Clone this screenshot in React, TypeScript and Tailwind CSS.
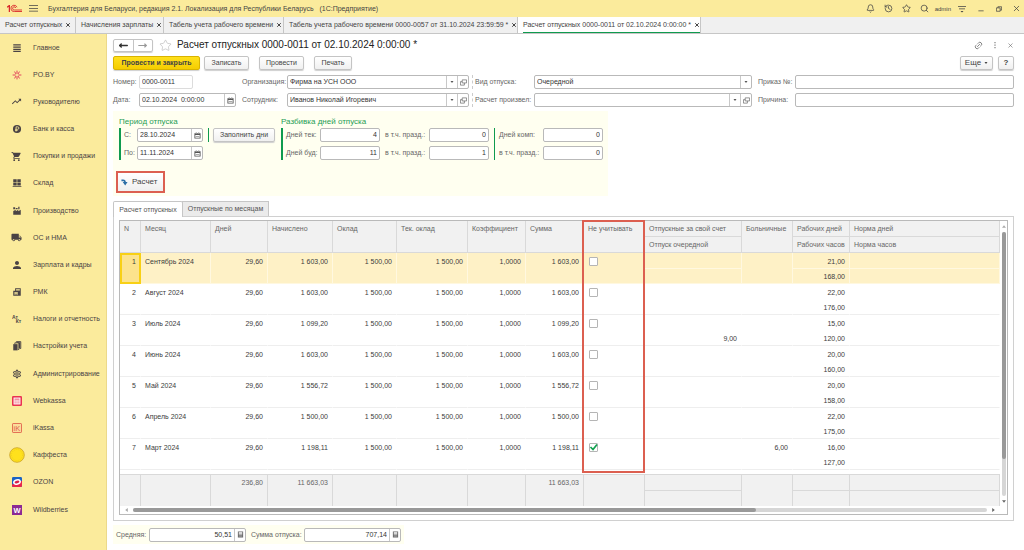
import { useState } from "react";
import type { ReactNode } from "react";
import { Bell, History, Link2, MoveLeft, MoveRight, Search, Star, X } from "lucide-react";
import { MdLocalShipping, MdPerson, MdShoppingCart, MdOutlineSettings, MdTrendingUp } from "react-icons/md";

const TABS = [
  { title: "Расчет отпускных", width: "w-[76px]" },
  { title: "Начисления зарплаты", width: "w-[88px]" },
  { title: "Табель учета рабочего времени", width: "w-[120px]" },
  { title: "Табель учета рабочего времени 0000-0057 от 31.10.2024 23:59:59 *", width: "w-[234px]" },
  { title: "Расчет отпускных 0000-0011 от 02.10.2024 0:00:00 *", width: "w-[183px]", active: true },
];

const ROWS = [
  { month: "Сентябрь 2024", sum: "1 603,00", days: "21,00", hours: "168,00" },
  { month: "Август 2024", sum: "1 603,00", days: "22,00", hours: "176,00" },
  { month: "Июль 2024", sum: "1 099,20", days: "15,00", hours: "120,00", vacation: "9,00" },
  { month: "Июнь 2024", sum: "1 603,00", days: "20,00", hours: "160,00" },
  { month: "Май 2024", sum: "1 556,72", days: "20,00", hours: "158,00" },
  { month: "Апрель 2024", sum: "1 500,00", days: "22,00", hours: "175,00" },
  { month: "Март 2024", sum: "1 198,11", days: "16,00", hours: "127,00", sick: "6,00" },
];

function Svg({ children, box = "0 0 16 16", className = "size-[10px]" }: { children: ReactNode; box?: string; className?: string }) {
  return (
    <svg viewBox={box} className={className} fill="currentColor" aria-hidden="true">
      {children}
    </svg>
  );
}

const MENU: { label: string; icon: ReactNode }[] = [
  { label: "Главное", icon: <Svg><path d="M2 2h12v2H2zM2 5.500h12v2H2zM2 9h12v2H2zM2 12.500h12v2H2z" /></Svg> },
  {
    label: "PO.BY",
    icon: (
      <Svg className="size-[10px] text-[#e2445c]">
        <path d="M8 1v5M8 10v5M1 8h5M10 8h5M4 2.500l2.500 4M12 2.500L9.500 6.500M4 13.500l2.500-4M12 13.500L9.500 9.500" stroke="currentColor" strokeWidth="1.600" fill="none" />
      </Svg>
    ),
  },
  { label: "Руководителю", icon: <MdTrendingUp className="size-[11px]" /> },
  {
    label: "Банк и касса",
    icon: (
      <Svg>
        <circle cx="8" cy="8" r="6.500" />
        <path d="M6.500 12V4.500h2.500a2 2 0 0 1 0 4H5M5 10.300h4" fill="none" stroke="#fbeb9c" strokeWidth="1.300" />
      </Svg>
    ),
  },
  { label: "Покупки и продажи", icon: <MdShoppingCart className="size-[11px]" /> },
  { label: "Склад", icon: <Svg><path d="M2 2h5.500v5H2zM8.500 2H14v5H8.500zM2 8h5.500v4H2zM8.500 8H14v4H8.500zM1 13h14v1.500H1z" /></Svg> },
  { label: "Производство", icon: <Svg><path d="M2 14V8l4-2v2.500l4-2.500v2.500L14 6v8zM2 2h3v3H2zM6 3h3v2H6zM10 1h2v4h-2z" /></Svg> },
  { label: "ОС и НМА", icon: <MdLocalShipping className="size-[11px]" /> },
  { label: "Зарплата и кадры", icon: <MdPerson className="size-[12px]" /> },
  {
    label: "РМК",
    icon: (
      <Svg>
        <path d="M2 6h3V2h9v12H2zM6.500 3.500v2h6v-2zM4 8v4.500h5V8z" fillRule="evenodd" />
        <path d="M5 9h3v1H5zM5 11h3v1H5z" />
      </Svg>
    ),
  },
  {
    label: "Налоги и отчетность",
    icon: (
      <Svg>
        <text x="0" y="8" fontSize="8" fontWeight="bold">Ат</text>
        <text x="6" y="15" fontSize="8" fontWeight="bold">Кт</text>
      </Svg>
    ),
  },
  {
    label: "Настройки учета",
    icon: (
      <Svg>
        <path d="M2 5h7v10H2z" />
        <path d="M4.500 4.500V3H11v10.500h-1.500M7 2.500V1h7v11h-2" fill="none" stroke="currentColor" strokeWidth="1.500" />
        <path d="M8 2h5v9h-2V3H8z" />
      </Svg>
    ),
  },
  { label: "Администрирование", icon: <MdOutlineSettings className="size-[10px]" /> },
  {
    label: "Webkassa",
    icon: (
      <Svg>
        <rect x="0" y="0" width="16" height="16" rx="2" fill="#ea3351" />
        <path d="M2.500 2.500h11v11h-11z" fill="#fff" />
        <path d="M4 5h8M4 8h2M7 8h2M10 8h2M4 11h2M7 11h2M10 11h2" stroke="#ea3351" strokeWidth="1.400" />
      </Svg>
    ),
  },
  {
    label: "iKassa",
    icon: (
      <Svg>
        <rect x="0.800" y="0.800" width="14.400" height="14.400" rx="1" fill="#fbdc9a" stroke="#e0614c" strokeWidth="1.400" />
        <text x="2.500" y="12.500" fontSize="12" fill="#e0614c">iK</text>
      </Svg>
    ),
  },
  {
    label: "Каффеста",
    icon: (
      <Svg className="size-[16px]">
        <circle cx="8" cy="8" r="7.300" fill="#ffe11c" stroke="#c9a128" strokeWidth="0.800" />
        <circle cx="8" cy="8" r="5.500" fill="none" stroke="#e8c51e" strokeWidth="0.600" strokeDasharray="1 1" />
      </Svg>
    ),
  },
  {
    label: "OZON",
    icon: (
      <Svg>
        <rect width="16" height="16" rx="2" fill="#1a62c4" />
        <path d="M0 12l16-6v8a2 2 0 0 1-2 2H2a2 2 0 0 1-2-2z" fill="#e8274b" />
        <ellipse cx="8" cy="8" rx="5.200" ry="3.400" transform="rotate(-14 8 8)" fill="#d8234a" stroke="#fff" strokeWidth="2.600" />
      </Svg>
    ),
  },
  {
    label: "Wildberries",
    icon: (
      <Svg>
        <rect width="16" height="16" fill="#8b2a94" />
        <text x="8" y="12.500" fontSize="12" fontWeight="bold" fill="#fff" textAnchor="middle">W</text>
      </Svg>
    ),
  },
];

const BTN =
  "h-[14px] rounded-[2px] border border-[#c4c4c4] bg-linear-to-b from-white to-[#f0f0f0] shadow-[0_1px_1px_#cfcfcf] whitespace-nowrap text-[#444]";
const BOX = "flex h-[14px] min-w-0 overflow-hidden rounded-[2px] border border-[#b9b9b9] bg-white text-[#333]";

function CalendarIcon() {
  return (
    <Svg className="size-[7px] text-[#555]">
      <path d="M1 3h14v12H1zM3 7v6h10V7zM4 1h2v3H4zM10 1h2v3h-2z" fillRule="evenodd" />
      <path d="M4 9h8v1H4z" />
    </Svg>
  );
}

function CalcIcon() {
  return (
    <Svg className="size-[7px] text-[#666]">
      <path d="M2 1h12v14H2zM4 3v3h8V3zM4 8v1h8V8zM4 11v1h8v-1z" fillRule="evenodd" />
    </Svg>
  );
}

function OpenIcon() {
  return (
    <Svg className="size-[7px] text-[#666]">
      <path d="M5 2h10v7H5zM5 6H1v8h9V9" fill="none" stroke="currentColor" strokeWidth="1.600" />
    </Svg>
  );
}

function TextField({ id, value = "", right = false, className = "", button, buttonLabel }: {
  id: string; value?: string; right?: boolean; className?: string; button?: ReactNode; buttonLabel?: string;
}) {
  return (
    <div className={`${BOX} ${className}`}>
      <input
        id={id}
        defaultValue={value}
        className={`w-0 min-w-0 flex-1 px-[2px] leading-[12px] outline-none ${right ? "text-right" : ""}`}
      />
      {button && (
        <button aria-label={buttonLabel} className="flex w-[11px] shrink-0 items-center justify-center border-l border-[#c8c8c8]">
          {button}
        </button>
      )}
    </div>
  );
}

function SelectField({ id, value = "", open = false }: { id: string; value?: string; open?: boolean }) {
  return (
    <div className={BOX}>
      <div className="relative flex min-w-0 flex-1">
        <select id={id} defaultValue={value} className="w-full appearance-none px-[2px] leading-[12px] outline-none">
          <option value={value}>{value}</option>
        </select>
        <span className="pointer-events-none absolute inset-y-0 right-0 flex w-[11px] items-center justify-center border-l border-[#c8c8c8]">
          <Svg box="0 0 6 4" className="h-[2px] w-[4px] text-[#555]"><path d="M0 0h6L3 4z" /></Svg>
        </span>
      </div>
      {open && (
        <button aria-label="Открыть" className="flex w-[11px] shrink-0 items-center justify-center border-l border-[#c8c8c8]">
          <OpenIcon />
        </button>
      )}
    </div>
  );
}

function TitleBar() {
  return (
    <header className="flex h-[17px] items-center bg-[#fbeb9c] pr-[3px] pl-[6px] text-[#444]">
      <svg viewBox="0 0 32 18" className="h-[9px] w-[17px] shrink-0 text-[#d9292b]" role="img" aria-label="1С">
        <path d="M1 5l4-3h2v14H4.500V6L1 7.500z" fill="currentColor" />
        <path d="M21 6.500A6.300 6.300 0 1 0 16 15h15M18.500 8A3.200 3.200 0 1 0 16 12h15" fill="none" stroke="currentColor" strokeWidth="1.800" />
      </svg>
      <button aria-label="Меню" className="ml-[6px]">
        <Svg className="size-[9px]"><path d="M0 2h16v1.500H0zM0 7h16v1.500H0zM0 12h16v1.500H0z" /></Svg>
      </button>
      <span className="ml-[10px] whitespace-pre">
        Бухгалтерия для Беларуси, редакция 2.1. Локализация для Республики Беларусь{"   "}(1С:Предприятие)
      </span>
      <div className="ml-auto flex items-center">
        <div className="flex gap-[9px]">
          <button aria-label="Уведомления"><Bell size={9} /></button>
          <button aria-label="История"><History size={9} /></button>
          <button aria-label="Избранное"><Star size={9} /></button>
          <button aria-label="Поиск"><Search size={9} /></button>
        </div>
        <span className="ml-[6px] text-[6px]">admin</span>
        <button aria-label="Настройки окна" className="ml-[7px]">
          <Svg className="size-[8px]"><path d="M0 2h16v1.500H0zM2 7h12v1.500H2zM5 12h6l-3 3z" /></Svg>
        </button>
        <button aria-label="Свернуть" className="ml-[12px]">
          <Svg className="size-[6px]"><path d="M1 12h14v2H1z" /></Svg>
        </button>
        <button aria-label="Развернуть" className="ml-[12px]">
          <Svg className="size-[6px]">
            <path d="M1 5h10v9H1zM5 5V2h10v9h-4" fill="none" stroke="currentColor" strokeWidth="2" />
          </Svg>
        </button>
        <button aria-label="Закрыть" className="ml-[10px]"><X size={9} /></button>
      </div>
    </header>
  );
}

function WindowTabs() {
  return (
    <nav className="flex h-[17px] border-b border-[#c6c6c6] bg-[#f0f0f0] text-[#444]">
      {TABS.map(t => (
        <div
          key={t.title}
          className={`flex shrink-0 items-center border-r border-[#c6c6c6] pl-[5px] ${t.width} ${t.active ? "bg-white" : ""}`}
        >
          <div className={`flex h-[16px] items-center gap-[3px] whitespace-nowrap ${t.active ? "border-b border-[#0f9b4f]" : ""}`}>
            <button>{t.title}</button>
            <button aria-label="Закрыть вкладку"><X size={6} strokeWidth={4} /></button>
          </div>
        </div>
      ))}
    </nav>
  );
}

function Sidebar() {
  return (
    <aside className="flex w-[107px] shrink-0 flex-col border-r border-[#ecd98a] bg-[#fbeb9c] pb-[27px]">
      {MENU.map(m => (
        <a key={m.label} href="#" className="flex flex-1 items-center text-[#4a4344]">
          <span className="flex w-[33px] shrink-0 justify-center">{m.icon}</span>
          <span className="whitespace-nowrap">{m.label}</span>
        </a>
      ))}
    </aside>
  );
}

function HeaderFields() {
  return (
    <div className="mt-[5px] grid grid-cols-[26px_97px_51px_182fr_65px_218fr_43px_219fr] items-center gap-y-[4px] whitespace-nowrap text-[#666]">
      <label htmlFor="number">Номер:</label>
      <TextField id="number" value="0000-0011" className="w-[54px] border-[#dcdcdc]!" />
      <label htmlFor="org" className="pl-[6px]">Организация:</label>
      <SelectField id="org" value="Фирма на УСН ООО" open />
      <label htmlFor="kind" className="ml-[3px] border-l border-dashed border-[#ccc] pl-[2px] leading-[14px]">Вид отпуска:</label>
      <SelectField id="kind" value="Очередной" />
      <label htmlFor="order" className="pl-[6px]">Приказ №:</label>
      <TextField id="order" />

      <label htmlFor="date">Дата:</label>
      <TextField id="date" value="02.10.2024  0:00:00" button={<CalendarIcon />} buttonLabel="Выбрать дату" />
      <label htmlFor="employee" className="pl-[6px]">Сотрудник:</label>
      <SelectField id="employee" value="Иванов Николай Игоревич" open />
      <label htmlFor="author" className="ml-[3px] border-l border-dashed border-[#ccc] pl-[2px] leading-[14px]">Расчет произвел:</label>
      <SelectField id="author" open />
      <label htmlFor="reason" className="pl-[6px]">Причина:</label>
      <TextField id="reason" />
    </div>
  );
}

function VacationPeriod() {
  return (
    <section className="mt-[4px] h-[85px] w-[495px] bg-[#fffff0] px-[3px] pt-[5px] whitespace-nowrap text-[#666]">
      <div className="flex gap-[6px] pl-[3px]">
        <div className="w-[156px]">
          <h2 className="text-[8px] leading-[12px] text-[#1f9d55]">Период отпуска</h2>
          <div className="flex items-start">
            <div className="grid grid-cols-[13px_66px] items-center gap-y-[4px] border-l-2 border-[#0f9b4f] pl-[3px]">
              <label htmlFor="from">С:</label>
              <TextField id="from" value="28.10.2024" button={<CalendarIcon />} buttonLabel="Выбрать начало" />
              <label htmlFor="to">По:</label>
              <TextField id="to" value="11.11.2024" button={<CalendarIcon />} buttonLabel="Выбрать окончание" />
            </div>
            <div className="ml-[5px] border-l border-[#0f9b4f] pl-[4px]">
              <button className={`${BTN} w-[62px]`}>Заполнить дни</button>
            </div>
          </div>
        </div>
        <div>
          <h2 className="text-[8px] leading-[12px] text-[#1f9d55]">Разбивка дней отпуска</h2>
          <div className="flex">
            <div className="grid grid-cols-[34px_60px_49px_60px] items-center gap-y-[4px] border-l-2 border-[#0f9b4f] pl-[3px]">
              <label htmlFor="cur">Дней тек:</label>
              <TextField id="cur" value="4" right />
              <label htmlFor="curHol" className="pl-[5px]">в т.ч. празд.:</label>
              <TextField id="curHol" value="0" right />
              <label htmlFor="next">Дней буд:</label>
              <TextField id="next" value="11" right />
              <label htmlFor="nextHol" className="pl-[5px]">в т.ч. празд.:</label>
              <TextField id="nextHol" value="1" right />
            </div>
            <div className="ml-[5px] grid grid-cols-[44px_60px] items-center gap-y-[4px] border-l border-[#0f9b4f] pl-[4px]">
              <label htmlFor="comp">Дней комп:</label>
              <TextField id="comp" value="0" right />
              <label htmlFor="compHol">в т.ч. празд.:</label>
              <TextField id="compHol" value="0" right />
            </div>
          </div>
        </div>
      </div>
      <div className="mt-[11px] w-[49px] border-2 border-[#dc5f50]">
        <button className="flex h-[18px] w-full items-center gap-[4px] bg-linear-to-b from-white to-[#efefef] pl-[3px] text-[8px] text-[#444]">
          <Svg className="size-[7px] text-[#2c6ea6]">
            <path d="M1 1h4c4 0 6 2 6 6h4l-5.500 8L4 7h3c0-2-1-2-6-2z" />
          </Svg>
          Расчет
        </button>
      </div>
    </section>
  );
}

const TH = "border-r border-b border-[#d9d9d9] bg-[#f1f1f1] pl-[4px] text-left align-top font-normal leading-[15px] text-[#666]";
const TF = "border-t border-r border-[#d9d9d9] bg-[#f1f1f1] pr-[4px] text-right align-top leading-[15px] text-[#666]";

function VacationTable() {
  const [skipped, setSkipped] = useState([6]);

  const toggle = (i: number) => setSkipped(s => (s.includes(i) ? s.filter(n => n !== i) : [...s, i]));

  return (
    <div className="relative border border-[#b9b9b9]">
      <div className="flex">
        <table className="w-full flex-1 table-fixed border-separate border-spacing-0 whitespace-nowrap">
          <colgroup>
            <col className="w-[21px]" />
            <col className="w-[70px]" />
            <col className="w-[57px]" />
            <col className="w-[65px]" />
            <col className="w-[64px]" />
            <col className="w-[71px]" />
            <col className="w-[58px]" />
            <col className="w-[58px]" />
            <col className="w-[61px]" />
            <col className="w-[97px]" />
            <col className="w-[51px]" />
            <col className="w-[57px]" />
            <col />
          </colgroup>
          <thead>
            <tr className="h-[16px]">
              {["N", "Месяц", "Дней", "Начислено", "Оклад", "Тек. оклад", "Коэффициент", "Сумма", "Не учитывать"].map(h => (
                <th key={h} rowSpan={2} className={TH}>{h}</th>
              ))}
              <th className={TH}>Отпускные за свой счет</th>
              <th rowSpan={2} className={TH}>Больничные</th>
              <th className={TH}>Рабочих дней</th>
              <th className={TH}>Норма дней</th>
            </tr>
            <tr className="h-[16px]">
              <th className={TH}>Отпуск очередной</th>
              <th className={TH}>Рабочих часов</th>
              <th className={TH}>Норма часов</th>
            </tr>
          </thead>
          {ROWS.map((r, i) => {
            const sel = i === 0;
            const base = `border-r pr-[4px] text-right align-top leading-[13px] ${sel ? "border-[#fff8e0] bg-[#fef1c6]" : "border-transparent"}`;
            const upper = `${base} pt-[2px]`;
            const lower = `${base} border-y pt-[1px] ${sel ? "" : "border-b-[#eeeeee]"}`;
            const cell = `${upper} border-b ${sel ? "" : "border-b-[#eeeeee]"}`;
            return (
              <tbody key={r.month} className="text-[#3c3c3c]">
                <tr className="h-[15px]">
                  <td
                    rowSpan={2}
                    className={
                      sel
                        ? "border-2 border-[#f8d015] bg-[#fce38d] pr-[3px] text-right align-top leading-[13px]"
                        : cell
                    }
                  >
                    {i + 1}
                  </td>
                  <td rowSpan={2} className={`${cell} pl-[4px] text-left!`}>{r.month}</td>
                  <td rowSpan={2} className={cell}>29,60</td>
                  <td rowSpan={2} className={cell}>{r.sum}</td>
                  <td rowSpan={2} className={cell}>1 500,00</td>
                  <td rowSpan={2} className={cell}>1 500,00</td>
                  <td rowSpan={2} className={cell}>1,0000</td>
                  <td rowSpan={2} className={cell}>{r.sum}</td>
                  <td rowSpan={2} className={cell}>
                    <span className="relative mt-[2px] ml-[5px] block size-[9px]">
                      <input
                        type="checkbox"
                        aria-label={`Не учитывать ${r.month}`}
                        checked={skipped.includes(i)}
                        onChange={() => toggle(i)}
                        className="block size-[9px] appearance-none rounded-[1px] border border-[#b5b5b5] bg-white"
                      />
                      {skipped.includes(i) && (
                        <svg viewBox="0 0 18 18" className="pointer-events-none absolute inset-0 size-[9px]">
                          <path d="M3 8l5 5L16 3" fill="none" stroke="#12a150" strokeWidth="3.500" />
                        </svg>
                      )}
                    </span>
                  </td>
                  <td className={upper}></td>
                  <td rowSpan={2} className={cell}>{r.sick}</td>
                  <td className={upper}>{r.days}</td>
                  <td className={upper}></td>
                </tr>
                <tr className="h-[16px]">
                  <td className={lower}>{r.vacation}</td>
                  <td className={lower}>{r.hours}</td>
                  <td className={lower}></td>
                </tr>
              </tbody>
            );
          })}
          <tfoot>
            <tr className="h-[4px]"><td colSpan={13}></td></tr>
            <tr className="h-[16px]">
              {["", "", "236,80", "11 663,03", "", "", "", "11 663,03", ""].map((v, i) => (
                <td key={i} rowSpan={2} className={TF}>{v}</td>
              ))}
              <td className={TF}></td>
              <td rowSpan={2} className={TF}></td>
              <td className={TF}></td>
              <td className={TF}></td>
            </tr>
            <tr className="h-[16px]">
              <td className={TF}></td>
              <td className={TF}></td>
              <td className={TF}></td>
            </tr>
          </tfoot>
        </table>
        <div className="flex w-[7px] shrink-0 flex-col items-center gap-[4px] pt-[4px] pb-[3px] text-[#666]">
          <Svg box="0 0 6 4" className="h-[3px] w-[4px] text-[#aaa]"><path d="M0 4h6L3 0z" /></Svg>
          <div className="w-[4px] flex-1 rounded-full bg-[#d6d6d6]">
            <div className="h-[86%] rounded-full bg-[#999]"></div>
          </div>
          <Svg box="0 0 6 4" className="h-[3px] w-[4px]"><path d="M0 0h6L3 4z" /></Svg>
        </div>
      </div>
      <div className="flex h-[8px] items-center gap-[5px] pr-[12px] pl-[5px] text-[#666]">
        <Svg box="0 0 4 6" className="h-[4px] w-[3px] text-[#aaa]"><path d="M4 0v6L0 3z" /></Svg>
        <div className="h-[4px] flex-1 rounded-full bg-[#d6d6d6]">
          <div className="h-full w-[73%] rounded-full bg-[#999]"></div>
        </div>
        <Svg box="0 0 4 6" className="h-[4px] w-[3px]"><path d="M0 0v6l4-3z" /></Svg>
      </div>
      {/* red frame round the «Не учитывать» column */}
      <div className="pointer-events-none absolute -top-px left-[462px] h-[253px] w-[63px] border-2 border-[#dc5f50]"></div>
    </div>
  );
}

export default function App() {
  return (
    <div className="flex min-h-screen flex-col bg-white font-['Liberation_Sans',Arial,sans-serif] text-[7px] leading-[10px]">
      <TitleBar />
      <WindowTabs />
      <div className="flex flex-1">
        <Sidebar />
        <main className="min-w-0 flex-1 pt-[4px] pr-[10px] pl-[6px]">
          <div className="flex h-[14px] items-center">
            <div className="flex h-[13px] w-[40px] rounded-[2px] border border-[#c4c4c4] text-[#333] shadow-[0_1px_1px_#cfcfcf]">
              <button aria-label="Назад" className="flex flex-1 items-center justify-center border-r border-[#c4c4c4]">
                <MoveLeft size={9} strokeWidth={4} />
              </button>
              <button aria-label="Вперед" className="flex flex-1 items-center justify-center text-[#999]">
                <MoveRight size={9} strokeWidth={3} />
              </button>
            </div>
            <button aria-label="В избранное" className="ml-[6px] text-[#aaa]"><Star size={13} strokeWidth={1} /></button>
            <h1 className="ml-[5px] text-[10px] whitespace-nowrap text-[#222]">Расчет отпускных 0000-0011 от 02.10.2024 0:00:00 *</h1>
            <div className="ml-auto flex items-center gap-[8px] text-[#666]">
              <button aria-label="Ссылка"><Link2 size={9} className="-rotate-45" /></button>
              <button aria-label="Еще действия">
                <Svg className="size-[8px]"><path d="M7 2h2v2.500H7zM7 7h2v2.500H7zM7 12h2v2.500H7z" /></Svg>
              </button>
              <button aria-label="Закрыть"><X size={7} strokeWidth={2} /></button>
            </div>
          </div>

          <div className="mt-[4px] flex">
            <button className="h-[14px] w-[87px] rounded-[2px] border border-[#d9b300] bg-linear-to-b from-[#ffe01a] to-[#f5cd00] font-bold whitespace-nowrap text-[#444] shadow-[0_1px_1px_#cfcfcf]">
              Провести и закрыть
            </button>
            <button className={`${BTN} ml-[4px] w-[45px]`}>Записать</button>
            <button className={`${BTN} ml-[10px] w-[45px]`}>Провести</button>
            <button className={`${BTN} ml-[10px] w-[38px]`}>Печать</button>
            <button className={`${BTN} ml-auto flex w-[33px] items-center justify-center gap-[3px] text-[8px]`}>
              Еще
              <Svg box="0 0 6 4" className="h-[2px] w-[4px]"><path d="M0 0h6L3 4z" /></Svg>
            </button>
            <button className={`${BTN} ml-[5px] w-[16px] text-[8px] font-bold`}>?</button>
          </div>

          <HeaderFields />
          <VacationPeriod />

          <div className="mt-[5px] flex h-[15px] text-[#555]">
            <button className="z-10 -mb-px w-[70px] rounded-t-[2px] border border-b-0 border-[#c6c6c6] bg-white whitespace-nowrap">
              Расчет отпускных
            </button>
            <button className="-ml-px w-[87px] border border-b-0 border-[#c6c6c6] bg-[#ebebeb] whitespace-nowrap">
              Отпускные по месяцам
            </button>
          </div>
          <div className="border border-[#d0d0d0] px-[5px] pt-[3px] pb-[5px]">
            <VacationTable />
          </div>

          <div className="mt-[4px] flex h-[19px] w-fit items-center bg-[#fffff0] px-[3px] text-[#666]">
            <label htmlFor="avg" className="w-[33px]">Средняя:</label>
            <TextField id="avg" value="50,51" right className="w-[97px]" button={<CalcIcon />} buttonLabel="Калькулятор" />
            <label htmlFor="total" className="w-[58px] pl-[5px] whitespace-nowrap">Сумма отпуска:</label>
            <TextField id="total" value="707,14" right className="w-[97px]" button={<CalcIcon />} buttonLabel="Калькулятор" />
          </div>
        </main>
      </div>
    </div>
  );
}
